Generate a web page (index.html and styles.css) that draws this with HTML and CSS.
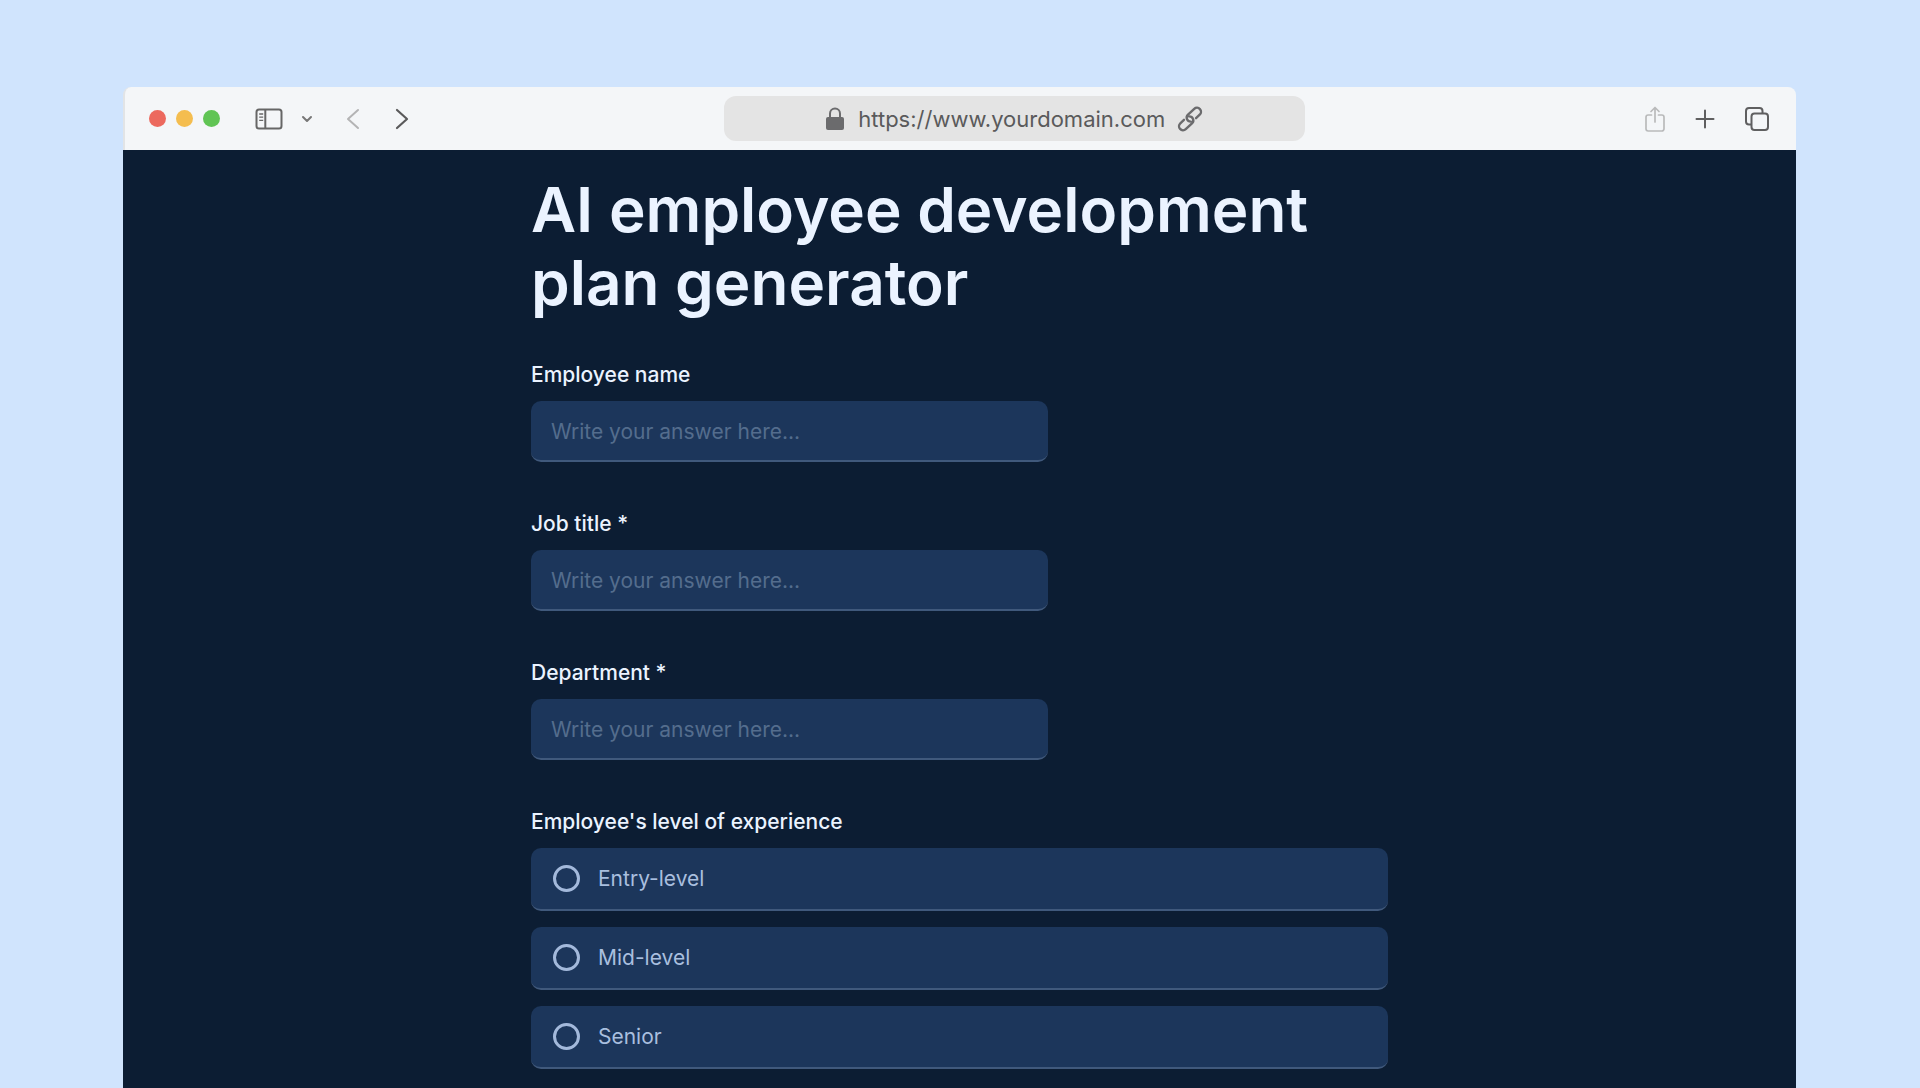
FILE: index.html
```html
<!DOCTYPE html>
<html lang="en">
<head>
	<meta charset="utf-8">
	<title>AI employee development plan generator</title>
	<link rel="stylesheet" href="styles.css">
</head>
<body>
	<div class="window">
		<!-- browser bar -->
		<header class="toolbar">
			<div class="tools-left">
				<div class="lights">
					<span class="light red"></span>
					<span class="light yellow"></span>
					<span class="light green"></span>
				</div>
				<div class="sidebar-tools">
					<button class="tool" type="button" aria-label="Sidebar">
						<svg width="28" height="22" viewBox="0 0 28 22" fill="none" stroke="#666" stroke-width="2">
							<rect x="1.5" y="1.5" width="25" height="19" rx="2.5"/>
							<path d="M10.3 1.5v19"/>
							<path d="M4.2 6h4M4.2 9.2h4M4.2 12.4h4" stroke-width="1.3"/>
						</svg>
					</button>
					<button class="tool" type="button" aria-label="Tab groups">
						<svg width="12" height="8" viewBox="0 0 12 8" fill="none" stroke="#777" stroke-width="2" stroke-linecap="round" stroke-linejoin="round"><path d="M2 2l4 4 4-4"/></svg>
					</button>
				</div>
				<div class="history">
					<button class="tool" type="button" aria-label="Back">
						<svg width="14" height="22" viewBox="0 0 14 22" fill="none" stroke="#b4b4b5" stroke-width="2" stroke-linecap="round" stroke-linejoin="round"><path d="M12 2l-10 9 10 9"/></svg>
					</button>
					<button class="tool" type="button" aria-label="Forward">
						<svg width="14" height="22" viewBox="0 0 14 22" fill="none" stroke="#5a5a5b" stroke-width="2.2" stroke-linecap="round" stroke-linejoin="round"><path d="M2 2l10 9-10 9"/></svg>
					</button>
				</div>
			</div>
			<div class="address">
				<svg width="18" height="24" viewBox="0 0 18 24">
					<path d="M4 11V6.5a5 5 0 0 1 10 0V11" fill="none" stroke="#6b6b6d" stroke-width="2"/>
					<rect x="0" y="10" width="18" height="13" rx="2" fill="#6b6b6d"/>
				</svg>
				<span class="url">https://www.yourdomain.com</span>
				<!-- two chain links, running up to the right -->
				<svg width="26" height="26" viewBox="0 0 26 26" fill="none" stroke="#6b6b6d" stroke-width="2.4" stroke-linecap="round" stroke-linejoin="round">
					<g transform="rotate(-43 13 13)">
						<path d="M18 16.5H23a4 4 0 0 0 0-8H14.5a4 4 0 0 0-2.700 7"/>
						<path d="M8 9.500H3a4 4 0 0 0 0 8H11.500a4 4 0 0 0 2.700-7"/>
					</g>
				</svg>
			</div>
			<div class="tools-right">
				<button class="tool" type="button" aria-label="Share">
					<svg width="20" height="26" viewBox="0 0 20 26" fill="none" stroke="#b9babb" stroke-width="1.7" stroke-linecap="round" stroke-linejoin="round">
						<path d="M6.5 9H3.2A2.2 2.2 0 0 0 1 11.2V22.8A2.2 2.2 0 0 0 3.2 25h13.6A2.2 2.2 0 0 0 19 22.8V11.2A2.2 2.2 0 0 0 16.8 9H13.5"/>
						<path d="M10 16V1.5M6 5.5l4-4 4 4"/>
					</svg>
				</button>
				<button class="tool" type="button" aria-label="New tab">
					<svg width="20" height="20" viewBox="0 0 20 20" fill="none" stroke="#5f5f60" stroke-width="2" stroke-linecap="round"><path d="M10 1.5v17M1.5 10h17"/></svg>
				</button>
				<button class="tool" type="button" aria-label="Tabs">
					<svg width="24" height="24" viewBox="0 0 24 24" fill="none" stroke="#5f5f60" stroke-width="2">
						<path d="M6.5 17.5H4A3 3 0 0 1 1 14.5V4a3 3 0 0 1 3-3h10.5a3 3 0 0 1 3 3v2.5"/>
						<rect x="6.5" y="6.5" width="16.5" height="16.5" rx="3"/>
					</svg>
				</button>
			</div>
		</header>
		<!-- form -->
		<main class="page">
			<form class="form">
				<h1>AI employee development plan generator</h1>
				<div class="field">
					<label class="label" for="name">Employee name</label>
					<input class="answer" type="text" id="name" placeholder="Write your answer here...">
				</div>
				<div class="field">
					<label class="label" for="job">Job title *</label>
					<input class="answer" type="text" id="job" placeholder="Write your answer here...">
				</div>
				<div class="field">
					<label class="label" for="department">Department *</label>
					<input class="answer" type="text" id="department" placeholder="Write your answer here...">
				</div>
				<fieldset class="field">
					<legend class="label">Employee's level of experience</legend>
					<div class="options">
						<label class="option"><input type="radio" name="level" value="entry">Entry-level</label>
						<label class="option"><input type="radio" name="level" value="mid">Mid-level</label>
						<label class="option"><input type="radio" name="level" value="senior">Senior</label>
					</div>
				</fieldset>
			</form>
		</main>
	</div>
</body>
</html>
```
FILE: styles.css
```css
*{margin: 0;padding: 0;box-sizing: border-box;}
body{
	min-height: 100vh;
	display: flex;
	padding: 87px 124px 0 123px;
	background: #d0e4fd;
	font-family: Inter, "Liberation Sans", sans-serif;
}
.window{
	flex: 1;
	display: flex;
	flex-direction: column;
}
/* browser bar */
.toolbar{
	display: grid;
	grid-template-columns: 359fr 348fr 294fr;
	align-items: center;
	height: 63px;
	background: #f4f6f8;
	border-left: 2px solid #e2e4e6;
	border-radius: 8px 8px 0 0;
}
.tools-left{
	display: flex;
	align-items: center;
	padding-left: 24px;
}
.lights{
	display: flex;
	gap: 10px;
}
.light{
	width: 17px;
	height: 17px;
	border-radius: 50%;
}
.red{background: #ec695e;}
.yellow{background: #f4bd4f;}
.green{background: #60c454;}
.tool{
	display: flex;
	border: 0;
	background: none;
	cursor: pointer;
}
.sidebar-tools{
	display: flex;
	align-items: center;
	gap: 18px;
	margin-left: 35px;
}
.history{
	display: flex;
	gap: 35px;
	margin-left: 33px;
}
.address{
	display: flex;
	align-items: center;
	justify-content: center;
	gap: 14px;
	height: 45px;
	border-radius: 12px;
	background: #e4e4e4;
}
.address svg:last-child{
	margin-left: -2px;
}
.url{
	font-size: 22px;
	line-height: 28px;
	color: #5a5a5b;
}
.tools-right{
	display: flex;
	align-items: center;
	justify-content: flex-end;
	gap: 30px;
	padding-right: 27px;
}
/* form */
.page{
	flex: 1;
	padding: 23px 24px 18px;
	background: #0c1d33;
}
.form{
	max-width: 857px;
	margin: 0 auto;
}
h1{
	margin-bottom: 42px;
	font-size: 62px;
	line-height: 73px;
	font-weight: 600;
	color: #ebf3ff;
}
.field{
	border: 0;
	margin-bottom: 48px;
}
.field:last-child{
	margin-bottom: 0;
}
.label{
	display: block;
	margin-bottom: 13px;
	font-size: 21px;
	line-height: 27px;
	font-weight: 500;
	color: #ebf3ff;
}
.answer{
	display: block;
	width: 517px;
	max-width: 100%;
	height: 61px;
	padding: 2px 20px 0;
	border: 0;
	border-bottom: 2px solid #40597c;
	border-radius: 10px;
	background: #1c365b;
	font-family: inherit;
	font-size: 21px;
	color: #ebf3ff;
}
.answer::placeholder{
	color: #546d8d;
}
.options{
	display: grid;
	gap: 16px;
}
.option{
	display: flex;
	align-items: center;
	gap: 18px;
	height: 63px;
	padding: 0 22px;
	border-bottom: 2px solid #40597c;
	border-radius: 10px;
	background: #1c365b;
	font-size: 21px;
	color: #a9bfdf;
	cursor: pointer;
}
.option input{
	appearance: none;
	width: 27px;
	height: 27px;
	border: 3px solid #a3b9db;
	border-radius: 50%;
}
.option input:checked{
	background: #adc3e5;
}
```
